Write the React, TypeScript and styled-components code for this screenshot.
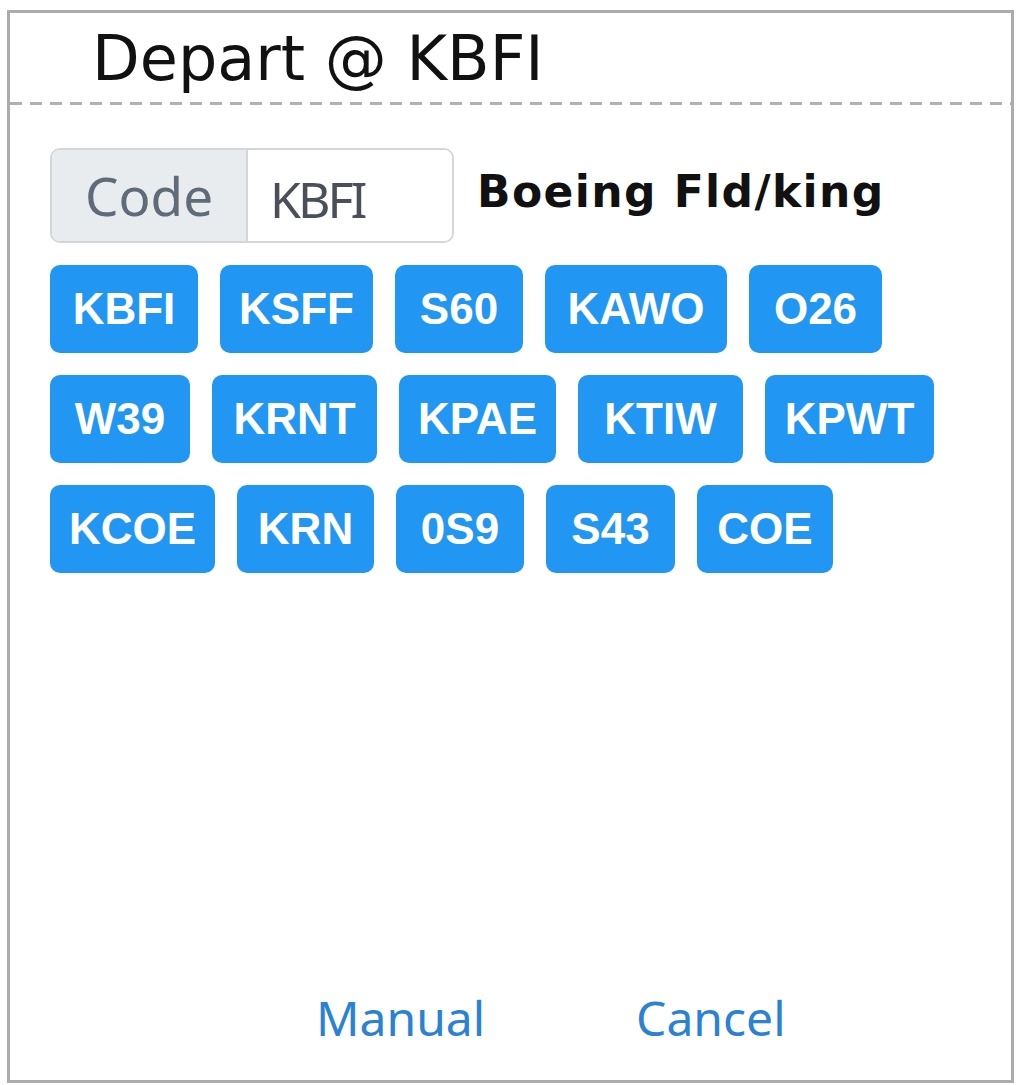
import React from "react";
import styled, { createGlobalStyle } from "styled-components";

const Global = createGlobalStyle`
  html, body { margin: 0; padding: 0; background: #ffffff; }
  body { width: 1020px; height: 1085px; overflow: hidden; }
`;

const Dialog = styled.div`
  box-sizing: border-box;
  margin: 10px 0 0 7px;
  width: 1007px;
  height: 1073px;
  border: 3px solid #acacac;
  display: flex;
  flex-direction: column;
  background: #fff;
`;

const Header = styled.div`
  padding: 15px 0 15px 82px;
  background: repeating-linear-gradient(
      to right,
      #b0b0b0 0 12px,
      transparent 12px 20px
    )
    left bottom / 100% 3px no-repeat;
`;

const Title = styled.h1`
  margin: 0;
  font-family: "DejaVu Sans", Verdana, sans-serif;
  font-weight: normal;
  font-size: 62px;
  line-height: 62px;
  color: #111;
`;

const Body = styled.div`
  flex: 1;
  padding: 43px 0 0 40px;
  display: flex;
  flex-direction: column;
`;

const CodeRow = styled.div`
  display: flex;
  align-items: center;
`;

const InputGroup = styled.div`
  box-sizing: border-box;
  width: 404px;
  height: 95px;
  display: flex;
  border: 2px solid #d2d6da;
  border-radius: 10px;
  overflow: hidden;
`;

const Addon = styled.span`
  box-sizing: border-box;
  width: 196px;
  display: flex;
  align-items: center;
  padding-left: 33px;
  background: #e9ecef;
  border-right: 2px solid #d2d6da;
  font-family: "Noto Sans", sans-serif;
  font-size: 53px;
  color: #5f6b78;
`;

const CodeInput = styled.input`
  flex: 1;
  min-width: 0;
  border: none;
  outline: none;
  padding: 6px 0 0 22px;
  background: #fff;
  font-family: "Noto Sans", sans-serif;
  font-size: 50px;
  letter-spacing: -3px;
  color: #4a4f5a;
`;

const AirportName = styled.span`
  margin-left: 23px;
  margin-top: -8px;
  font-family: "DejaVu Sans", Verdana, sans-serif;
  font-weight: bold;
  font-size: 44px;
  letter-spacing: 1.4px;
  color: #111;
`;

const ButtonGrid = styled.div`
  margin-top: 22px;
  display: flex;
  flex-wrap: wrap;
  gap: 22px;
  width: 900px;
`;

const CodeButton = styled.button<{ $w: number }>`
  box-sizing: border-box;
  width: ${(p) => p.$w}px;
  height: 88px;
  padding: 0;
  border: none;
  border-radius: 10px;
  background: #2196f3;
  color: #fff;
  font-family: "Liberation Sans", Arial, sans-serif;
  font-weight: bold;
  font-size: 44px;
  cursor: pointer;
`;

const Footer = styled.div`
  margin-top: auto;
  display: flex;
  gap: 151px;
  padding: 0 0 30px 266px;
`;

const LinkButton = styled.button`
  border: none;
  background: none;
  padding: 0;
  font-family: "Noto Sans", sans-serif;
  font-size: 48px;
  color: #2a82d4;
  cursor: pointer;
`;

const codes: [string, number][] = [
  ["KBFI", 148], ["KSFF", 153], ["S60", 128], ["KAWO", 182], ["O26", 133],
  ["W39", 140], ["KRNT", 165], ["KPAE", 157], ["KTIW", 165], ["KPWT", 169],
  ["KCOE", 165], ["KRN", 137], ["0S9", 128], ["S43", 129], ["COE", 136],
];

export default function App() {
  return (
    <>
      <Global />
      <Dialog>
        <Header>
          <Title>Depart @ KBFI</Title>
        </Header>
        <Body>
          <CodeRow>
            <InputGroup>
              <Addon>Code</Addon>
              <CodeInput defaultValue="KBFI" />
            </InputGroup>
            <AirportName>Boeing Fld/king</AirportName>
          </CodeRow>
          <ButtonGrid>
            {codes.map(([c, w]) => (
              <CodeButton key={c} $w={w}>
                {c}
              </CodeButton>
            ))}
          </ButtonGrid>
          <Footer>
            <LinkButton>Manual</LinkButton>
            <LinkButton>Cancel</LinkButton>
          </Footer>
        </Body>
      </Dialog>
    </>
  );
}
